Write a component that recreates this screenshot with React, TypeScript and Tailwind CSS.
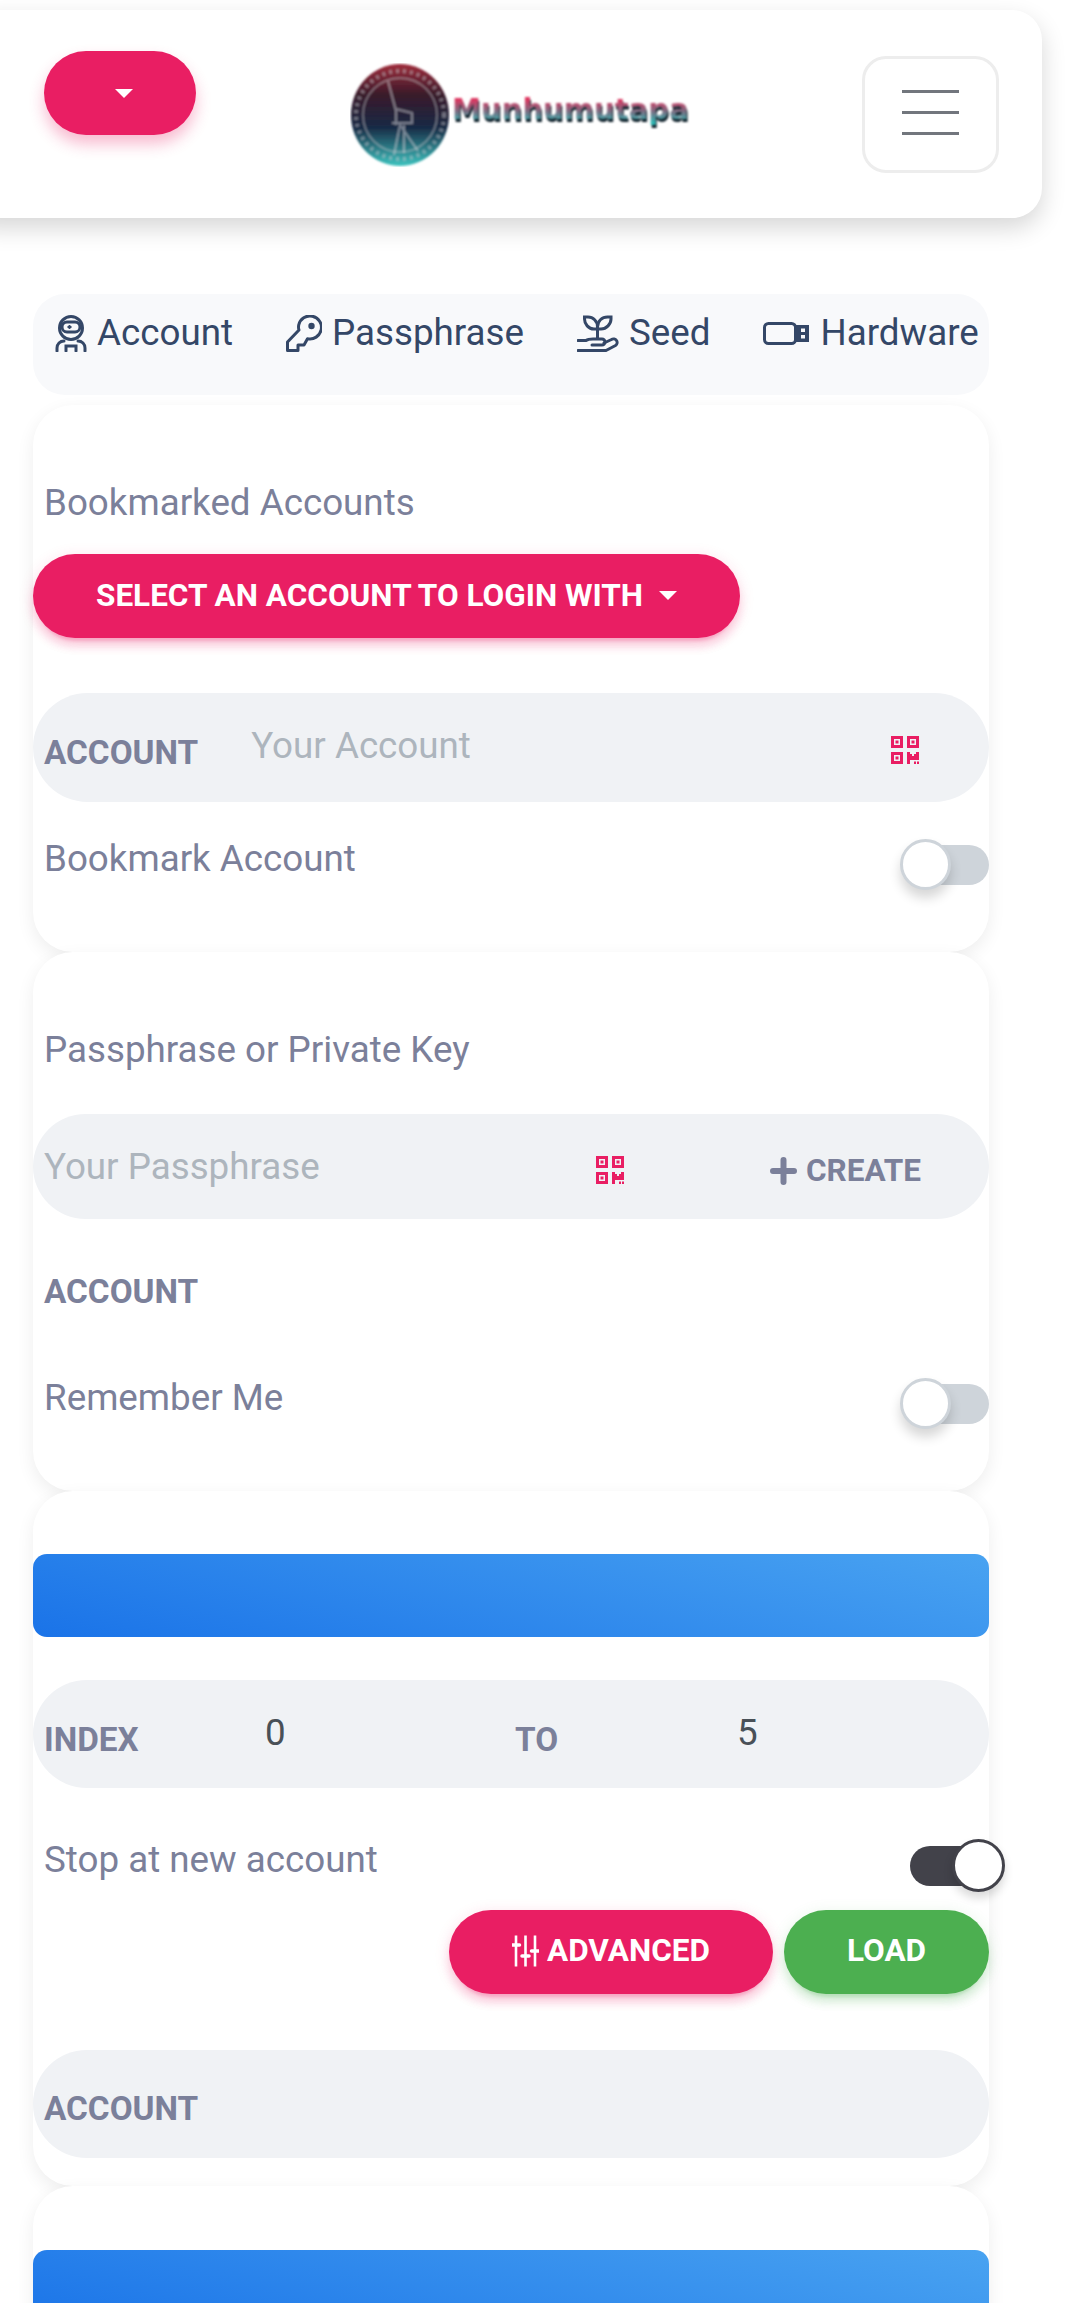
import React from "react";

const pinkShadow =
  "shadow-[0_9px_9px_0_rgba(233,30,99,0.15),0_9px_3px_-6px_rgba(233,30,99,0.2),0_3px_15px_0_rgba(233,30,99,0.15)]";
const greenShadow =
  "shadow-[0_9px_9px_0_rgba(76,175,80,0.15),0_9px_3px_-6px_rgba(76,175,80,0.2),0_3px_15px_0_rgba(76,175,80,0.15)]";

function Caret() {
  return <span className="block w-0 h-0 border-x-[9px] border-t-[9px] border-x-transparent border-t-white" />;
}

function AstronautIcon() {
  return (
    <svg width="32" height="37" viewBox="0 0 32 37" fill="none" stroke="#344767" strokeWidth="3" className="shrink-0">
      <circle cx="16" cy="13" r="11.5" />
      <path d="M7 12a5 5 0 0 1 5-5h8a5 5 0 0 1 0 10h-8a5 5 0 0 1-5-5Z" />
      <path d="M12.500 12h4M14.500 10v4" strokeWidth="1.800" />
      <path d="M2 36v-3c0-4 3-7 7-7M30 36v-3c0-4-3-7-7-7M11 36v-5h10v5" strokeLinecap="round" />
    </svg>
  );
}

function KeyIcon() {
  return (
    <svg width="36" height="37" viewBox="0 0 36 37" fill="none" stroke="#344767" strokeWidth="3" className="shrink-0">
      <path d="M1.500 35.500H12V30H18L21.500 23.700A11.500 11.500 0 1 0 12.700 10C12.400 12 12.600 14 13 15L1.500 27Z" strokeLinejoin="round" />
      <circle cx="25.500" cy="11" r="3.200" fill="#344767" stroke="none" />
    </svg>
  );
}

function SeedIcon() {
  return (
    <svg width="42" height="37" viewBox="0 0 42 37" fill="none" stroke="#344767" strokeWidth="3" className="shrink-0">
      <path d="M7.500 2H11C16 2 20.500 6 20.500 12V14H17C11.500 14 7.500 9 7.500 4Z" />
      <path d="M34 2H30.500C25 2 20.500 6 20.500 12V14H24C29.500 14 34 9 34 4Z" />
      <path d="M20.500 14V24" />
      <path d="M1 25.500H9C11 24 14 24 16 24H25A3 3 0 0 1 25 30H15" strokeLinecap="round" />
      <path d="M27 28L34.500 24.500A3.600 3.600 0 0 1 38.500 30.500L29 35.500H1" strokeLinecap="round" strokeLinejoin="round" />
    </svg>
  );
}

function UsbIcon() {
  return (
    <svg width="47" height="23" viewBox="0 0 47 23" fill="none" className="shrink-0">
      <rect x="1.500" y="1.500" width="31" height="20" rx="4" stroke="#344767" strokeWidth="3" />
      <path d="M33 3H46V20H33Z" fill="#344767" />
      <rect x="38" y="6.500" width="4" height="3.500" fill="#f8f9fb" />
      <rect x="38" y="13" width="4" height="3.500" fill="#f8f9fb" />
    </svg>
  );
}

function QrIcon() {
  return (
    <svg width="28" height="28" viewBox="0 0 28 28" fill="#e91e63" className="shrink-0">
      <path fillRule="evenodd" d="M0 0h12v12H0zM3 3v6h6V3zM4.500 4.500h3v3h-3zM16 0h12v12H16zM19 3v6h6V3zM20.500 4.500h3v3h-3zM0 16h12v12H0zM3 19v6h6v-6zM4.500 20.500h3v3h-3z" />
      <path d="M16 16h3v2h2v2h2v-2h2v-2h3v8h-9v4h-3zM23 25.500h2V28h-2zM26 25.500h2V28h-2z" />
    </svg>
  );
}

function SlidersIcon() {
  return (
    <svg width="27" height="32" viewBox="0 0 27 32" fill="none" stroke="white" strokeWidth="2.600" className="shrink-0">
      <path d="M4 0.500V31.500M13.500 0.500V31.500M23 0.500V31.500" />
      <path d="M0.500 10H7.500M10 21H17M19.500 16H26.500" strokeWidth="3.500" strokeLinecap="round" />
    </svg>
  );
}

function PlusIcon() {
  return (
    <svg width="27" height="28" viewBox="0 0 27 28" fill="none" stroke="#7b809a" strokeWidth="6" strokeLinecap="round" className="shrink-0">
      <path d="M13.500 3V25M3 14H24" />
    </svg>
  );
}

function LogoDisc() {
  return (
    <svg width="100" height="104" viewBox="0 0 100 104" className="shrink-0">
      <defs>
        <linearGradient id="disc" x1="0" y1="0" x2="0" y2="1">
          <stop offset="0" stopColor="#a02c3c" />
          <stop offset="0.3" stopColor="#3a1a2a" />
          <stop offset="0.62" stopColor="#182a45" />
          <stop offset="1" stopColor="#3ec4c0" />
        </linearGradient>
        <filter id="soft">
          <feGaussianBlur stdDeviation="1" />
        </filter>
      </defs>
      <g filter="url(#soft)">
        <ellipse cx="50" cy="52" rx="49" ry="51" fill="url(#disc)" />
        <circle cx="50" cy="52" r="37" fill="none" stroke="#c9c9d0" strokeOpacity="0.5" strokeWidth="1.500" />
        <circle cx="50" cy="52" r="44" fill="none" stroke="#c9c9d0" strokeOpacity="0.45" strokeWidth="4" strokeDasharray="3 4" />
        <path d="M38 18L46 48V62M46 46L62 50V60H42M44 92L50 62L68 88M54 62V90" fill="none" stroke="#d5d5dc" strokeOpacity="0.5" strokeWidth="2" />
      </g>
    </svg>
  );
}

function Logo() {
  return (
    <div className="flex items-start w-[340px]">
      <LogoDisc />
      <span className="mt-[26px] ml-[2px] font-['DejaVu_Sans',sans-serif] font-bold text-[29.1px] leading-[40px] whitespace-nowrap text-transparent bg-clip-text bg-[linear-gradient(180deg,#e0355f_25%,#7d6a80_55%,#2cb8b4_85%)] [filter:drop-shadow(1px_3px_0_#10222c)_blur(0.8px)]">
        Munhumutapa
      </span>
    </div>
  );
}

function Toggle({ on }: { on?: boolean }) {
  return (
    <div className={`relative w-[79px] h-[40px] mt-[14px] rounded-full shrink-0 ${on ? "bg-[#42424a]" : "bg-[#ced4da]"}`}>
      <span
        className={
          on
            ? "absolute left-[42px] -top-[7px] w-[53px] h-[53px] rounded-full bg-white border-[3px] border-[#42424a] shadow-[0_6px_10px_rgba(0,0,0,0.15)]"
            : "absolute -left-[10px] -top-[6px] w-[51px] h-[51px] rounded-full bg-white border-[3px] border-[#ced4da] shadow-[0_8px_12px_rgba(0,0,0,0.16)]"
        }
      />
    </div>
  );
}

function SwitchRow({ label, on, className }: { label: string; on?: boolean; className: string }) {
  return (
    <div className={`flex items-start justify-between pl-[11px] ${className}`}>
      <span className="mt-[1px] text-[36.75px] leading-[54px] text-[#7b809a]">{label}</span>
      <Toggle on={on} />
    </div>
  );
}

function GroupLabel({ children, className }: { children: React.ReactNode; className?: string }) {
  return <label className={`text-[33.3px] leading-[50px] font-bold text-[#7b809a] ${className ?? ""}`}>{children}</label>;
}

const card = "w-[956px] ml-[33px] bg-white rounded-[40px] shadow-[0_6px_18px_rgba(0,0,0,0.07)]";
const group = "flex bg-[#f0f2f5] rounded-[56px]";
const field =
  "bg-transparent outline-none text-[36.75px] leading-[54px] h-[54px] text-[#495057] placeholder:text-[#adb5bd]";
const bar = "h-[83px] rounded-[14px] bg-[linear-gradient(195deg,#49a3f1,#1a73e8)]";

export default function App() {
  return (
    <div className="h-[2303px] overflow-hidden bg-white font-['Roboto',sans-serif]">
      <header className="flex mt-[10px] -ml-[40px] w-[1082px] h-[208px] bg-white rounded-[30px] shadow-[0_10px_24px_rgba(0,0,0,0.16)]">
        <button className="flex items-center justify-center pl-[8px] mt-[41px] ml-[84px] w-[152px] h-[84px] rounded-full bg-[#e91e63] shadow-[0_9px_15px_rgba(233,30,99,0.3)]">
          <Caret />
        </button>
        <div className="mt-[53px] ml-[154px]">
          <Logo />
        </div>
        <button className="flex flex-col gap-[18px] items-center justify-start pt-[31px] mt-[46px] ml-[172px] w-[137px] h-[117px] rounded-[24px] border-[3px] border-[#ededed]">
          <span className="block w-[57px] h-[3px] bg-[#72767d]" />
          <span className="block w-[57px] h-[3px] bg-[#72767d]" />
          <span className="block w-[57px] h-[3px] bg-[#72767d]" />
        </button>
      </header>

      <nav className="mt-[76px] w-[956px] ml-[33px] h-[101px] rounded-[32px] bg-[#f8f9fb] flex items-start gap-[53px] pl-[22px] pt-[12px] text-[36.75px] leading-[54px] text-[#344767]">
        <a className="flex items-center gap-[10px]"><AstronautIcon />Account</a>
        <a className="flex items-center gap-[10px]"><KeyIcon />Passphrase</a>
        <a className="flex items-center gap-[10px]"><SeedIcon />Seed</a>
        <a className="flex items-center gap-[10px]"><UsbIcon />Hardware</a>
      </nav>

      <section className={`${card} mt-[10px] pt-[71px] pb-[66px]`}>
        <p className="pl-[11px] text-[36.75px] leading-[54px] text-[#7b809a]">Bookmarked Accounts</p>
        <button className={`flex items-center mt-[24px] w-[707px] h-[84px] pl-[63px] pb-[1px] gap-[16px] rounded-full bg-[#e91e63] text-white text-[31.5px] font-bold ${pinkShadow}`}>
          SELECT AN ACCOUNT TO LOGIN WITH
          <Caret />
        </button>
        <div className={`${group} mt-[55px] h-[109px] items-start pl-[11px]`}>
          <GroupLabel className="mt-[35px]">ACCOUNT</GroupLabel>
          <input className={`${field} ml-[53px] mt-[26px] w-[598px]`} placeholder="Your Account" readOnly />
          <div className="mt-[43px] ml-[42px]"><QrIcon /></div>
        </div>
        <SwitchRow label="Bookmark Account" className="mt-[29px]" />
      </section>

      <section className={`${card} pt-[71px] pb-[66px]`}>
        <p className="pl-[11px] text-[36.75px] leading-[54px] text-[#7b809a]">Passphrase or Private Key</p>
        <div className={`${group} mt-[37px] h-[105px] items-start pl-[11px]`}>
          <input className={`${field} mt-[26px] w-[552px]`} placeholder="Your Passphrase" readOnly />
          <div className="mt-[42px]"><QrIcon /></div>
          <div className="flex items-center gap-[9px] ml-[146px] mt-[43px] h-[28px] text-[31.5px] font-bold text-[#7b809a]">
            <PlusIcon />
            CREATE
          </div>
        </div>
        <div className="pl-[11px] mt-[48px] h-[49px]"><GroupLabel>ACCOUNT</GroupLabel></div>
        <SwitchRow label="Remember Me" className="mt-[54px]" />
      </section>

      <section className={`${card} pt-[63px] pb-[28px]`}>
        <div className={bar} />
        <div className={`${group} mt-[43px] h-[108px] items-start pl-[11px]`}>
          <GroupLabel className="mt-[35px] w-[221px]">INDEX</GroupLabel>
          <input className={`${field} mt-[26px] w-[250px]`} value="0" readOnly />
          <GroupLabel className="mt-[35px] w-[222px]">TO</GroupLabel>
          <input className={`${field} mt-[26px] w-[200px]`} value="5" readOnly />
        </div>
        <SwitchRow label="Stop at new account" on className="mt-[44px]" />
        <div className="flex justify-end gap-[11px] mt-[23px]">
          <button className={`flex items-center justify-center gap-[8px] pb-[2px] w-[324px] h-[84px] rounded-full bg-[#e91e63] text-white text-[31.5px] font-bold ${pinkShadow}`}>
            <SlidersIcon />
            ADVANCED
          </button>
          <button className={`w-[205px] h-[84px] pb-[2px] rounded-full bg-[#4caf50] text-white text-[31.5px] font-bold ${greenShadow}`}>
            LOAD
          </button>
        </div>
        <div className={`${group} mt-[56px] h-[108px] items-start pl-[11px]`}>
          <GroupLabel className="mt-[34px]">ACCOUNT</GroupLabel>
        </div>
      </section>

      <section className={`${card} pt-[64px] pb-[28px]`}>
        <div className={bar} />
      </section>
    </div>
  );
}
